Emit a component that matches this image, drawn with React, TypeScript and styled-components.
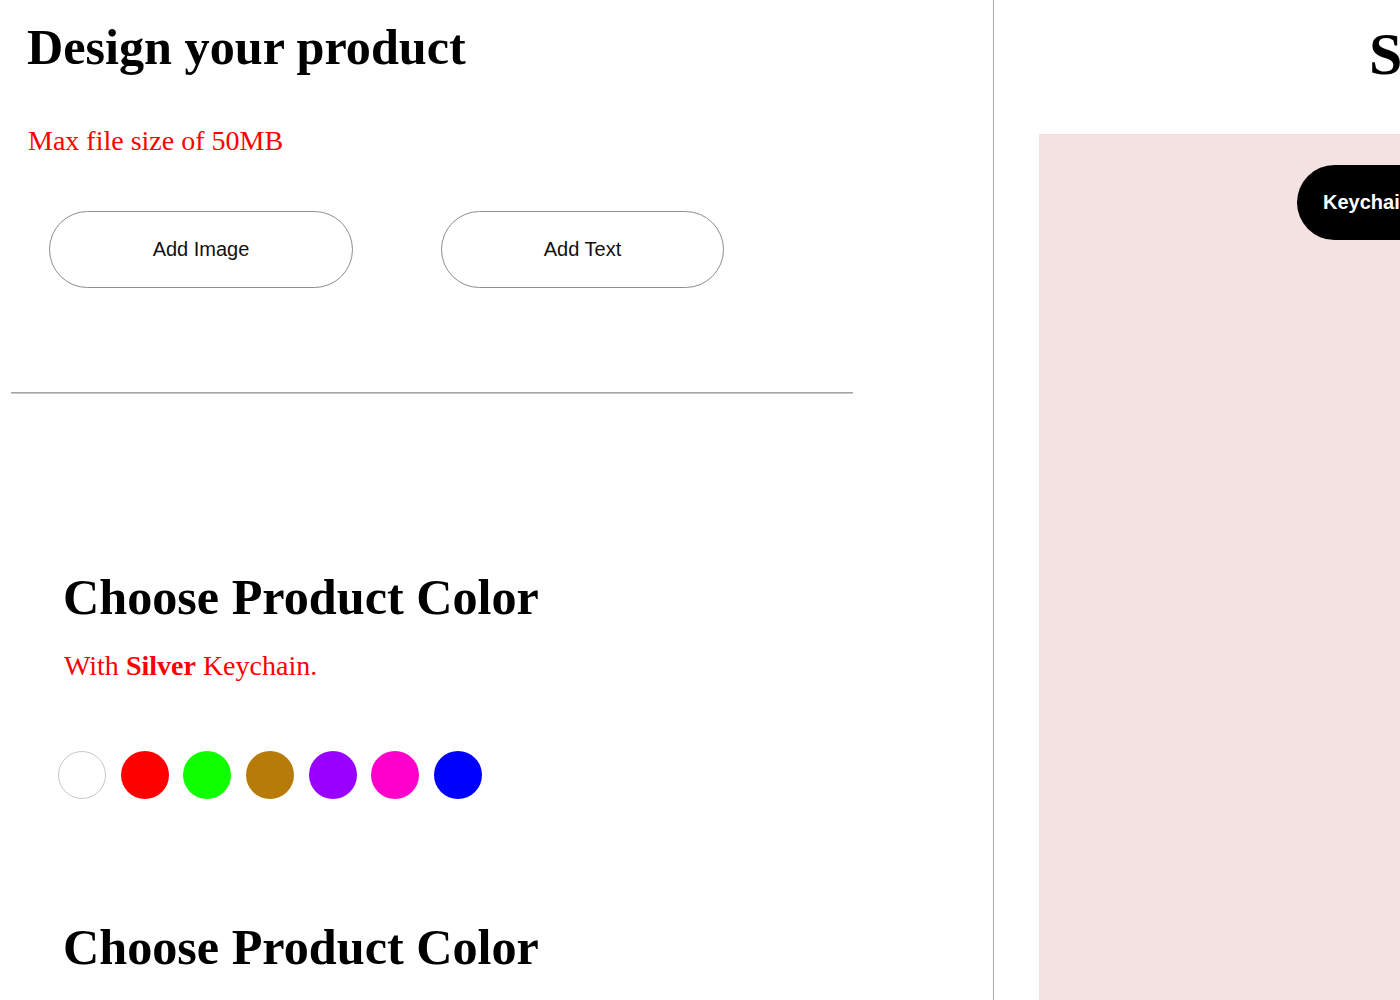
import React from 'react';
import styled, {createGlobalStyle} from 'styled-components';

const GlobalStyle = createGlobalStyle`
  html, body {
    margin: 0;
    padding: 0;
    overflow: hidden;
    background: #ffffff;
  }
  body {
    font-family: "Liberation Serif", "Times New Roman", serif;
    color: #000000;
  }
`;

const swatches = [
  '#ffffff',
  '#ff0000',
  '#10ff00',
  '#b77c07',
  '#9900ff',
  '#ff00cc',
  '#0000ff',
];

const Page = styled.div`
  display: flex;
  width: 2000px;
  min-height: 100vh;
`;

const Editor = styled.section`
  flex: 0 0 994px;
  box-sizing: border-box;
  min-height: 100vh;
  border-right: 1px solid #a9a9a9;
  display: flex;
  flex-direction: column;
  align-items: flex-start;
`;

const Title = styled.h1<{$indent: number; $top: number}>`
  margin: ${p => p.$top}px 0 0 ${p => p.$indent}px;
  font-size: 50.2px;
  line-height: 56px;
  font-weight: 700;
`;

const Note = styled.p<{$indent: number; $top: number}>`
  margin: ${p => p.$top}px 0 0 ${p => p.$indent}px;
  font-size: 28px;
  line-height: 31px;
  color: #ff0000;

  strong {
    font-weight: 700;
  }
`;

const ButtonRow = styled.div`
  display: flex;
  gap: 88px;
  margin: 55px 0 0 49px;
`;

const OutlineButton = styled.button<{$width: number}>`
  width: ${p => p.$width}px;
  height: 77px;
  border: 1px solid #8e8e8e;
  border-radius: 39px;
  background: #ffffff;
  font-family: "Liberation Sans", Arial, sans-serif;
  font-size: 20px;
  color: #111111;
  cursor: pointer;
`;

const Divider = styled.hr`
  width: 842px;
  height: 0;
  margin: 104px 0 0 11px;
  border: none;
  border-top: 1px solid #a6a6a6;
  border-bottom: 1px solid #c4c4c4;
`;

const Swatches = styled.div`
  display: flex;
  gap: 14.7px;
  margin: 70px 0 0 58px;
`;

const Swatch = styled.button<{$color: string}>`
  width: 48px;
  height: 48px;
  padding: 0;
  border-radius: 50%;
  background: ${p => p.$color};
  border: ${p => (p.$color === '#ffffff' ? '1px solid #c8c8c8' : 'none')};
  cursor: pointer;
`;

const Preview = styled.section`
  flex: 1;
  display: flex;
  flex-direction: column;
  align-items: stretch;
`;

const PreviewTitle = styled.h2`
  margin: 21px 0 0 375px;
  font-size: 60px;
  line-height: 66px;
  font-weight: 700;
  white-space: nowrap;
`;

const Canvas = styled.div`
  margin: 47px 0 0 45px;
  padding: 31px 0 0 258px;
  min-height: 900px;
  background: #f4e2e2;
  display: flex;
  align-items: flex-start;
`;

const Chip = styled.button`
  height: 75px;
  padding: 0 26px;
  border: none;
  border-radius: 38px;
  background: #000000;
  color: #ffffff;
  font-family: "Liberation Sans", Arial, sans-serif;
  font-size: 20px;
  font-weight: 700;
  white-space: nowrap;
`;

export default function App() {
  return (
    <>
      <GlobalStyle />
      <Page>
        <Editor>
          <Title $indent={27} $top={19}>
            Design your product
          </Title>
          <Note $indent={28} $top={50}>
            Max file size of 50MB
          </Note>
          <ButtonRow>
            <OutlineButton type="button" $width={304}>
              Add Image
            </OutlineButton>
            <OutlineButton type="button" $width={283}>
              Add Text
            </OutlineButton>
          </ButtonRow>
          <Divider />
          <Title $indent={63} $top={175}>
            Choose Product Color
          </Title>
          <Note $indent={64} $top={25}>
            With <strong>Silver</strong> Keychain.
          </Note>
          <Swatches>
            {swatches.map(c => (
              <Swatch key={c} type="button" $color={c} />
            ))}
          </Swatches>
          <Title $indent={63} $top={120}>
            Choose Product Color
          </Title>
        </Editor>
        <Preview>
          <PreviewTitle>Selected Product</PreviewTitle>
          <Canvas>
            <Chip type="button">Keychain Silver</Chip>
          </Canvas>
        </Preview>
      </Page>
    </>
  );
}
